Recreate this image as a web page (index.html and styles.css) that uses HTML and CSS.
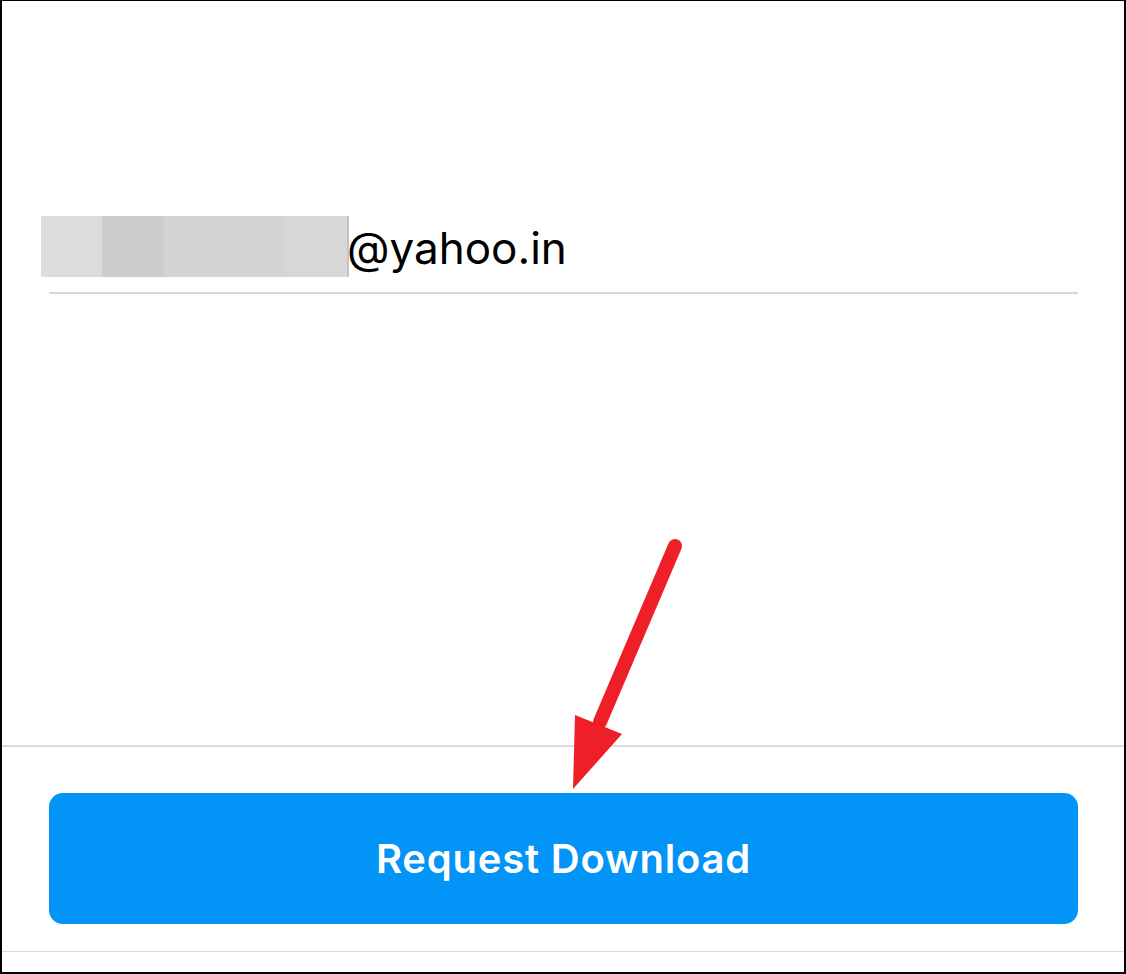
FILE: index.html
```html
<!DOCTYPE html>
<html lang="en">
<head>
<meta charset="utf-8">
<title>Request Download</title>
<link rel="stylesheet" href="styles.css">
</head>
<body>
<div class="frame">
  <div class="email-row">
    <div class="blur">
      <span class="b b1"></span><span class="b b2"></span><span class="b b3"></span><span class="b b4"></span><span class="b b5"></span>
    </div>
    <span class="email-text">@yahoo.in</span>
  </div>
  <div class="underline"></div>
  <div class="separator"></div>
  <button class="request-btn">Request Download</button>
  <div class="bottom-line"></div>
  <svg class="arrow" width="1126" height="974" viewBox="0 0 1126 974" xmlns="http://www.w3.org/2000/svg">
    <line x1="675" y1="546" x2="600" y2="722" stroke="#ee1f27" stroke-width="14" stroke-linecap="round"/>
    <polygon points="573,789 575,715 622,734" fill="#ee1f27"/>
  </svg>
</div>
</body>
</html>
```
FILE: styles.css
```css
html, body {
  margin: 0;
  padding: 0;
  background: #ffffff;
}
.frame {
  position: relative;
  width: 1126px;
  height: 974px;
  box-sizing: border-box;
  border-top: 1px solid #000;
  border-left: 2px solid #000;
  border-right: 2px solid #000;
  border-bottom: 2px solid #000;
  background: #fff;
  font-family: Inter, "Noto Sans", sans-serif;
  overflow: hidden;
}
.email-row {
  display: flex;
  align-items: center;
  margin-top: 215px;
  padding-left: 39px;
  height: 61px;
}
.blur {
  display: flex;
  height: 61px;
}
.b { display: block; height: 61px; }
.b1 { width: 61px; background: #dcdcdc; }
.b2 { width: 62px; background: #cdcdcd; }
.b3 { width: 122px; background: #d4d4d4; }
.b4 { width: 61px; background: #d7d7d7; }
.b5 { width: 2px; background: #c4c4c4; }
.email-text {
  font-size: 44px;
  color: #000;
  line-height: 1;
  margin-left: -2px;
  padding-top: 2px;
}
.underline {
  margin-top: 15px;
  margin-left: 47px;
  width: 1029px;
  height: 2px;
  background: #d8d8d8;
}
.separator {
  margin-top: 451px;
  height: 2px;
  background: #dbdbdb;
}
.request-btn {
  display: flex;
  align-items: center;
  justify-content: center;
  margin: 46px 0 0 47px;
  width: 1029px;
  height: 131px;
  border: none;
  border-radius: 14px;
  background: #0294f6;
  color: #fff;
  font-family: Inter, "Noto Sans", sans-serif;
  font-weight: 600;
  font-size: 40px;
  letter-spacing: 0.8px;
  padding: 0;
}
.bottom-line {
  margin-top: 27px;
  height: 1px;
  background: #dbdbdb;
}
.arrow {
  position: absolute;
  left: -2px;
  top: -1px;
  pointer-events: none;
}
```
